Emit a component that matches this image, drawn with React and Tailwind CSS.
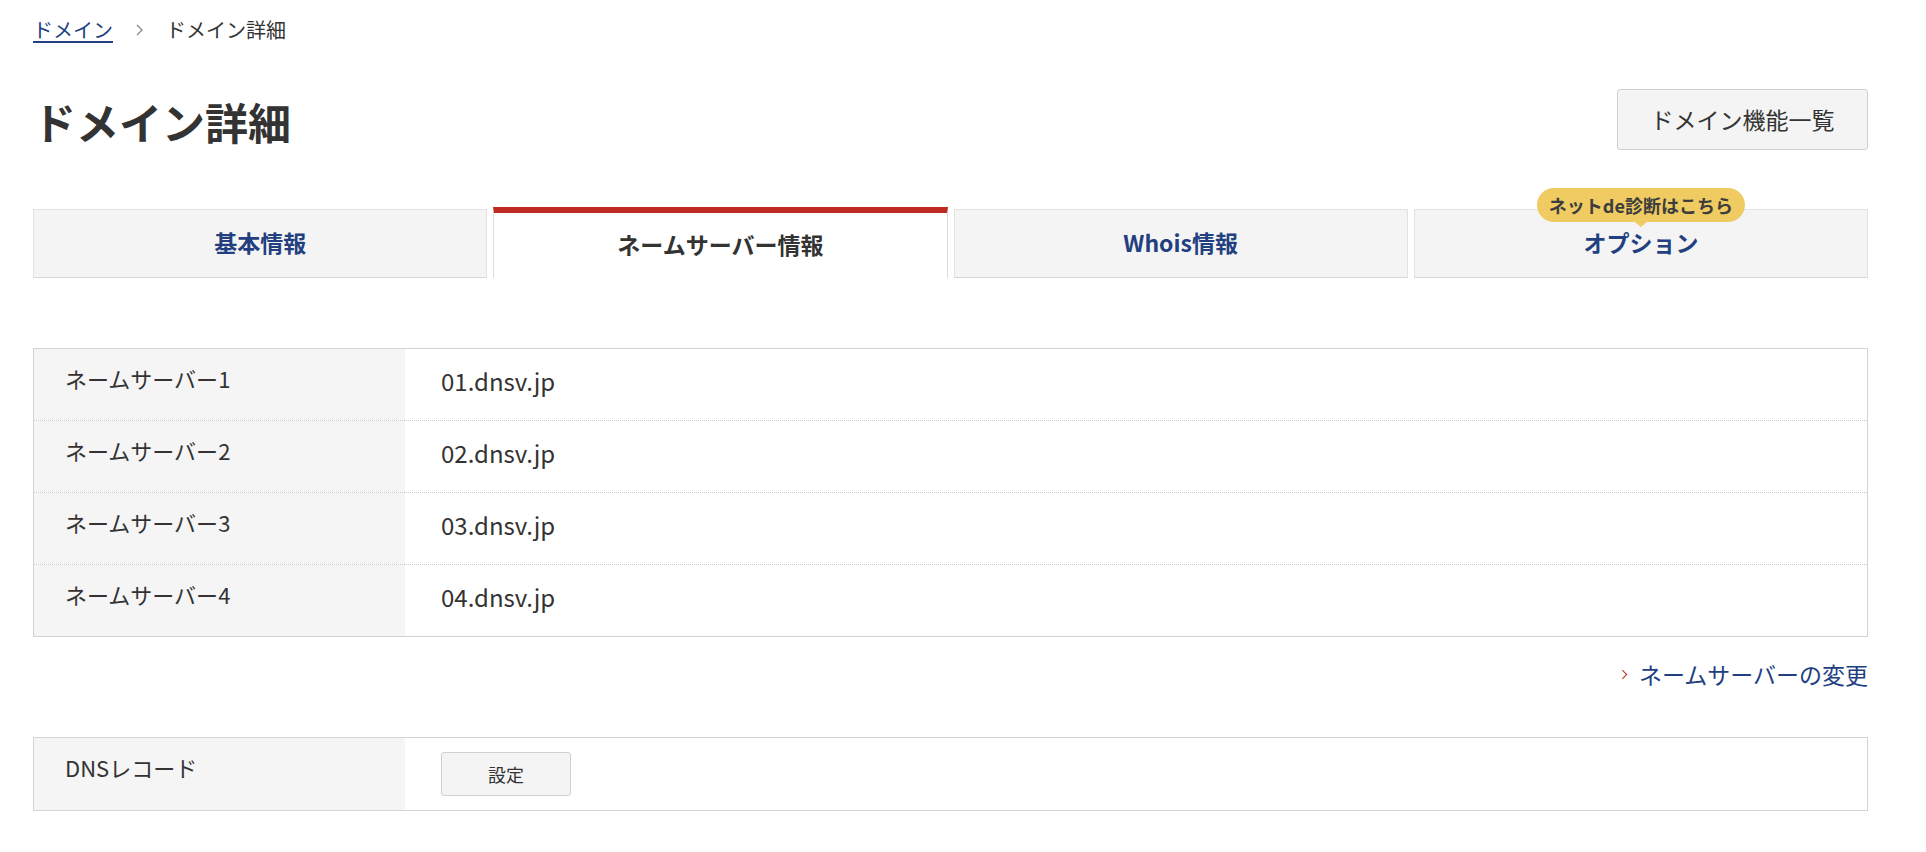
const servers = ['01.dnsv.jp', '02.dnsv.jp', '03.dnsv.jp', '04.dnsv.jp'];

const tabs = [
  { name: '基本情報' },
  { name: 'ネームサーバー情報', active: true },
  { name: 'Whois情報' },
  { name: 'オプション', badge: 'ネットde診断はこちら' },
];

function Chevron({ className }) {
  return (
    <svg viewBox="0 0 8 12" className={className} fill="none" stroke="currentColor" strokeWidth="1.3">
      <polyline points="1.5,1 6.5,6 1.5,11" />
    </svg>
  );
}

function Tab({ name, active, badge }) {
  if (active) {
    return (
      <div className="flex-1 h-[71px] bg-white border-t-[6px] border-t-[#bd2a1f] border-x border-x-[#dcdcdc] flex items-center justify-center">
        <span className="text-[23px] leading-[30px] font-bold text-[#333] -mt-[4px]">{name}</span>
      </div>
    );
  }
  return (
    <div className="relative flex-1 h-[69px] bg-[#f4f4f4] border border-[#e2e2e2] border-b-[#d6d6d6] flex items-center justify-center">
      {badge && (
        <div className="absolute left-1/2 -translate-x-1/2 -top-[22px] flex flex-col items-center">
          <span className="h-[34px] px-[12px] rounded-full bg-[#efcb62] text-[#3d3d3d] text-[18px] font-bold leading-[34px] whitespace-nowrap">
            {badge}
          </span>
          <span className="w-0 h-0 border-x-[6px] border-x-transparent border-t-[5px] border-t-[#efcb62]"></span>
        </div>
      )}
      <span className="text-[23px] leading-[30px] font-bold text-[#22407f] -mt-[4px]">{name}</span>
    </div>
  );
}

export default function App() {
  return (
    <div className="min-h-screen bg-white text-[#333] pl-[33px] pr-[58px] font-['Noto_Sans_CJK_JP','Noto_Sans',sans-serif]">
      {/* Breadcrumb */}
      <nav className="flex items-center pt-[16px] text-[20px] leading-[28px]">
        <a href="#" className="text-[#22407f] underline underline-offset-[3px]">ドメイン</a>
        <Chevron className="w-[9px] h-[12px] mx-[22px] text-[#888]" />
        <span className="text-[#333]">ドメイン詳細</span>
      </nav>

      {/* Title row */}
      <div className="flex items-start justify-between mt-[45px]">
        <h1 className="mt-[7px] text-[43px] leading-[50px] font-bold text-[#333]">ドメイン詳細</h1>
        <button className="w-[251px] h-[61px] rounded-[3px] bg-[#f4f4f4] border border-[#d0d0d0] text-[23px] text-[#333]">
          ドメイン機能一覧
        </button>
      </div>

      {/* Tabs */}
      <div className="flex items-end gap-[6px] mt-[57px]">
        {tabs.map((t) => (
          <Tab key={t.name} {...t} />
        ))}
      </div>

      {/* Name servers */}
      <div className="mt-[70px] border border-[#d4d4d4]">
        {servers.map((s, i) => (
          <div key={s} className={`flex ${i > 0 ? 'h-[72px] border-t border-dotted border-[#c8c8c8]' : 'h-[71px]'}`}>
            <div className="w-[371px] bg-[#f5f5f5] pl-[31px] pt-[15px] text-[22px] leading-[28px] text-[#333]">
              ネームサーバー{i + 1}
            </div>
            <div className="flex-1 pl-[36px] flex items-center pb-[7px] text-[24px] text-[#333]">{s}</div>
          </div>
        ))}
      </div>

      {/* Change link */}
      <div className="flex justify-end items-center mt-[22px] h-[30px]">
        <Chevron className="w-[7px] h-[11px] mr-[11px] text-[#c0392b]" />
        <a href="#" className="text-[23px] leading-[30px] text-[#22407f]">ネームサーバーの変更</a>
      </div>

      {/* DNS records */}
      <div className="mt-[48px] border border-[#d4d4d4] flex h-[74px]">
        <div className="w-[371px] bg-[#f5f5f5] pl-[31px] pt-[15px] text-[22px] leading-[28px] text-[#333]">
          DNSレコード
        </div>
        <div className="flex-1 pl-[36px] flex items-center">
          <button className="w-[130px] h-[44px] rounded-[3px] bg-[#f4f4f4] border border-[#cfcfcf] text-[18px] text-[#333]">
            設定
          </button>
        </div>
      </div>
    </div>
  );
}
